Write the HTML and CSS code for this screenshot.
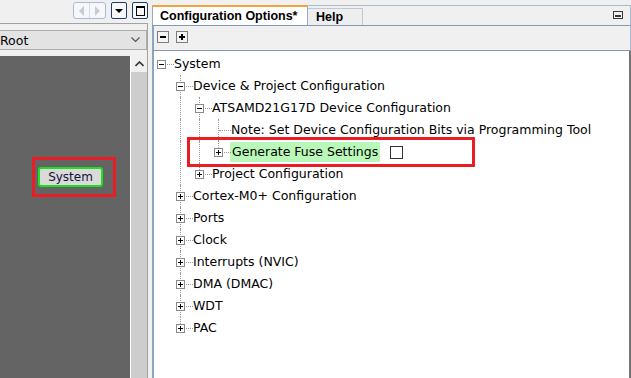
FILE: index.html
```html
<!DOCTYPE html>
<html lang="en">
<head>
<meta charset="UTF-8">
<title>Configuration Options</title>
<link rel="stylesheet" href="styles.css">
</head>
<body>
<div class="app">

    <div class="left">
        <div class="left-bar">
            <div class="nav-group">
                <span class="nav-btn"><span class="tri-left"></span></span>
                <span class="nav-btn"><span class="tri-right"></span></span>
            </div>
            <span class="win-btn"><span class="tri-down"></span></span>
            <span class="win-btn"><span class="max-icon"></span></span>
        </div>
        <div class="left-panel">
            <div class="combo">
                <span>Root</span>
                <svg width="9" height="6" viewBox="0 0 9 6"><polyline points="0.5,0.5 4.5,4.5 8.5,0.5" fill="none" stroke="#555" stroke-width="1.2"/></svg>
            </div>
            <div class="canvas-row">
                <div class="canvas">
                    <div class="graph-node">System</div>
                    <div class="mark mark-node"></div>
                </div>
                <div class="vscroll">
                    <div class="scroll-up">
                        <svg width="9" height="6" viewBox="0 0 9 6"><polyline points="0.5,5 4.5,1 8.5,5" fill="none" stroke="#333" stroke-width="1.6"/></svg>
                    </div>
                    <div class="scroll-track"></div>
                </div>
            </div>
        </div>
    </div>

    <div class="right">
        <div class="tabbar">
            <div class="tab active">Configuration Options*</div>
            <div class="tab">Help</div>
            <span class="min-icon"></span>
        </div>
        <div class="toolbar">
            <span class="tool-btn minus"></span>
            <span class="tool-btn plus"></span>
        </div>
        <div class="tree">
            <div class="row">
                <span class="cell root"><span class="box minus"></span></span>
                <span class="label">System</span>
            </div>
            <div class="row">
                <span class="cell"></span>
                <span class="cell tee"><span class="box minus"></span></span>
                <span class="label">Device &amp; Project Configuration</span>
            </div>
            <div class="row">
                <span class="cell"></span>
                <span class="cell line"></span>
                <span class="cell tee"><span class="box minus"></span></span>
                <span class="label">ATSAMD21G17D Device Configuration</span>
            </div>
            <div class="row">
                <span class="cell"></span>
                <span class="cell line"></span>
                <span class="cell line"></span>
                <span class="cell tee"></span>
                <span class="label">Note: Set Device Configuration Bits via Programming Tool</span>
            </div>
            <div class="row">
                <span class="cell"></span>
                <span class="cell line"></span>
                <span class="cell line"></span>
                <span class="cell last"><span class="box plus"></span></span>
                <span class="label selected">Generate Fuse Settings</span>
                <span class="check"></span>
            </div>
            <div class="row">
                <span class="cell"></span>
                <span class="cell line"></span>
                <span class="cell last"><span class="box plus"></span></span>
                <span class="label">Project Configuration</span>
            </div>
            <div class="row">
                <span class="cell"></span>
                <span class="cell tee"><span class="box plus"></span></span>
                <span class="label">Cortex-M0+ Configuration</span>
            </div>
            <div class="row">
                <span class="cell"></span>
                <span class="cell tee"><span class="box plus"></span></span>
                <span class="label">Ports</span>
            </div>
            <div class="row">
                <span class="cell"></span>
                <span class="cell tee"><span class="box plus"></span></span>
                <span class="label">Clock</span>
            </div>
            <div class="row">
                <span class="cell"></span>
                <span class="cell tee"><span class="box plus"></span></span>
                <span class="label">Interrupts (NVIC)</span>
            </div>
            <div class="row">
                <span class="cell"></span>
                <span class="cell tee"><span class="box plus"></span></span>
                <span class="label">DMA (DMAC)</span>
            </div>
            <div class="row">
                <span class="cell"></span>
                <span class="cell tee"><span class="box plus"></span></span>
                <span class="label">WDT</span>
            </div>
            <div class="row">
                <span class="cell"></span>
                <span class="cell last"><span class="box plus"></span></span>
                <span class="label">PAC</span>
            </div>
            <div class="mark mark-fuse"></div>
        </div>
    </div>

</div>
</body>
</html>
```

FILE: styles.css
```css
html, body {
    margin: 0;
    height: 100%;
    overflow: hidden;
}
body {
    background: #f0f0f0;
    font-family: "DejaVu Sans", Verdana, sans-serif;
    font-size: 12px;
    color: #000;
}
.app {
    display: flex;
    gap: 4px;
    height: 100vh;
}

/* left: graph view */
.left {
    width: 148px;
    display: flex;
    flex-direction: column;
}
.left-bar {
    height: 23px;
    display: flex;
    align-items: flex-start;
    justify-content: flex-end;
    gap: 5px;
    padding-top: 2px;
    box-sizing: border-box;
}
.nav-group {
    display: flex;
    border: 1px solid #aabcd4;
    border-radius: 3px;
    background: #f6f8fb;
}
.nav-btn {
    width: 15px;
    height: 15px;
    display: flex;
    align-items: center;
    justify-content: center;
}
.nav-btn + .nav-btn {
    border-left: 1px solid #d2dbe6;
}
.tri-left, .tri-right {
    width: 0;
    height: 0;
    border-top: 5px solid transparent;
    border-bottom: 5px solid transparent;
}
.tri-left {
    border-right: 5px solid #c5ccd4;
}
.tri-right {
    border-left: 5px solid #c5ccd4;
}
.win-btn {
    width: 14px;
    height: 15px;
    border: 1px solid #1d3c66;
    border-radius: 2px;
    background: #f7f7f7;
    display: flex;
    align-items: center;
    justify-content: center;
}
.tri-down {
    width: 0;
    height: 0;
    border-left: 4px solid transparent;
    border-right: 4px solid transparent;
    border-top: 4px solid #000;
}
.max-icon {
    width: 7px;
    height: 7px;
    border: 1px solid #000;
    border-top-width: 2px;
}
.left-panel {
    flex: 1;
    display: flex;
    flex-direction: column;
    border-top: 1px solid #a3a3a3;
    border-right: 1px solid #a3a3a3;
    min-height: 0;
}
.combo {
    height: 20px;
    margin: 6px 0 0 -4px;
    border: 1px solid #adadad;
    background: #e3e3e3;
    box-sizing: border-box;
    display: flex;
    align-items: center;
    justify-content: space-between;
    padding: 0 6px 0 3px;
    font-size: 12.5px;
}
.canvas-row {
    flex: 1;
    display: flex;
    margin-top: 6px;
    min-height: 0;
}
.canvas {
    width: 130px;
    background: #646464;
    position: relative;
}
.graph-node {
    position: absolute;
    left: 38px;
    top: 111px;
    width: 65px;
    height: 20px;
    box-sizing: border-box;
    border: 2px solid #1fe01f;
    border-radius: 3px;
    background: #dadada;
    color: #12123a;
    text-align: center;
    line-height: 16px;
}
.vscroll {
    width: 16px;
    border-left: 1px solid #fff;
    display: flex;
    flex-direction: column;
}
.scroll-up {
    height: 16px;
    background: #f0f0f0;
    display: flex;
    align-items: center;
    justify-content: center;
}
.scroll-track {
    flex: 1;
    background: #cdcdcd;
}
.mark {
    position: absolute;
    border: 3px solid #ec1c24;
    box-sizing: border-box;
}
.mark-node {
    left: 32px;
    top: 101px;
    width: 84px;
    height: 40px;
}

/* right: configuration options */
.right {
    flex: 1;
    display: flex;
    flex-direction: column;
    min-width: 0;
}
.tabbar {
    height: 19px;
    margin-top: 5px;
    display: flex;
    align-items: flex-start;
    border-top: 1px solid #a9bbd0;
    border-right: 1px solid #a9bbd0;
    border-bottom: 1px solid #7f9ab8;
}
.tab {
    font-family: "Liberation Sans", Arial, sans-serif;
    font-weight: bold;
    font-size: 12.5px;
    height: 100%;
    box-sizing: border-box;
    display: flex;
    align-items: center;
}
.tab.active {
    width: 156px;
    margin-top: -1px;
    height: 20px;
    padding-left: 7px;
    background: #fff;
    border-top: 2px solid #f2a43a;
    border-left: 1px solid #9aaac0;
    border-right: 1px solid #9aaac0;
}
.tab + .tab {
    margin-top: 2px;
    height: 17px;
    width: 55px;
    padding-left: 8px;
    background: #eeeeee;
    border-top: 1px solid #c0c8d2;
    border-right: 1px solid #c0c8d2;
}
.min-icon {
    margin: 5px 7px 0 auto;
    width: 10px;
    height: 8px;
    box-sizing: border-box;
    border: 1px solid #3a3a3a;
    position: relative;
}
.min-icon::after {
    content: "";
    position: absolute;
    left: 1px;
    right: 1px;
    bottom: 1px;
    height: 2px;
    background: #3a3a3a;
}
.toolbar {
    height: 25px;
    box-sizing: border-box;
    display: flex;
    align-items: flex-start;
    gap: 7px;
    padding: 5px 0 0 3px;
    border-left: 2px solid #8ea5c0;
    border-right: 1px solid #a9bbd0;
    border-bottom: 1px solid #8797a8;
}
.tool-btn {
    width: 12px;
    height: 12px;
    box-sizing: border-box;
    border: 1px solid #7c7c7c;
    background: #f4f4f4;
    position: relative;
}
.tool-btn::before,
.tool-btn.plus::after,
.box::before,
.box.plus::after {
    content: "";
    position: absolute;
    background: #000;
}
.tool-btn::before {
    left: 2px;
    top: 4px;
    width: 6px;
    height: 2px;
}
.tool-btn.plus::after {
    left: 4px;
    top: 2px;
    width: 2px;
    height: 6px;
}

/* tree */
.tree {
    flex: 1;
    position: relative;
    background: #fff;
    padding-top: 2px;
    border-left: 2px solid #8ea5c0;
    border-right: 2px solid #747474;
    font-size: 12.5px;
}
.row {
    height: 22px;
    display: flex;
    align-items: center;
}
.cell {
    width: 19px;
    height: 22px;
    flex: none;
    position: relative;
}
.cell.line::before,
.cell.tee::before,
.cell.last::before {
    content: "";
    position: absolute;
    left: 7px;
    top: 0;
    bottom: 0;
    border-left: 1px dotted #999;
}
.cell.last::before {
    bottom: 11px;
}
.cell.root::after,
.cell.tee::after,
.cell.last::after {
    content: "";
    position: absolute;
    left: 8px;
    top: 11px;
    width: 12px;
    border-top: 1px dotted #999;
}
.box {
    position: absolute;
    left: 3px;
    top: 7px;
    width: 9px;
    height: 9px;
    box-sizing: border-box;
    border: 1px solid #8a8a8a;
    background: #fff;
    z-index: 1;
}
.box::before {
    left: 1px;
    top: 3px;
    width: 5px;
    height: 1px;
}
.box.plus::after {
    left: 3px;
    top: 1px;
    width: 1px;
    height: 5px;
}
.label {
    padding: 0 2px 0 1px;
    line-height: 20px;
    white-space: nowrap;
}
.label.selected {
    background: #b9f8b9;
    padding: 0 2px;
}
.check {
    width: 13px;
    height: 13px;
    box-sizing: border-box;
    border: 1px solid #333;
    background: #fff;
    margin-left: 10px;
}
.mark-fuse {
    left: 33px;
    top: 86px;
    width: 288px;
    height: 30px;
}
```
